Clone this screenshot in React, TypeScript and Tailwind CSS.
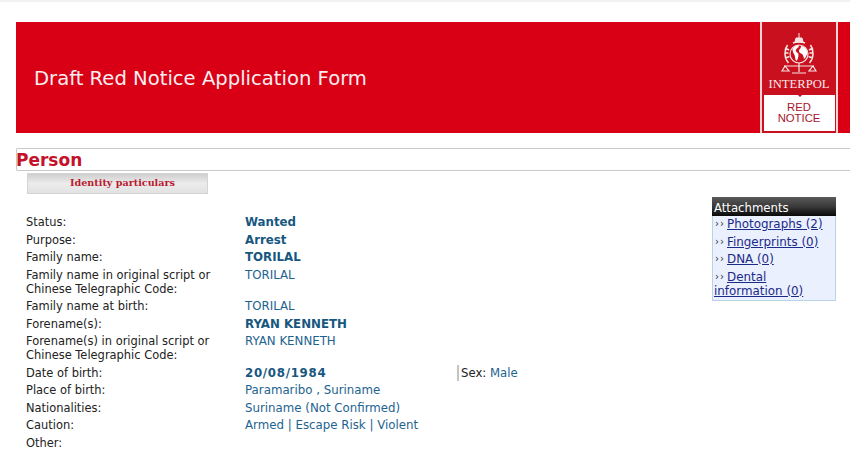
const ROWS: { label: string[]; value: string[]; bold?: boolean; sex?: boolean }[] = [
  { label: ["Status:"], value: ["Wanted"], bold: true },
  { label: ["Purpose:"], value: ["Arrest"], bold: true },
  { label: ["Family name:"], value: ["TORILAL"], bold: true },
  { label: ["Family name in original script or", "Chinese Telegraphic Code:"], value: ["TORILAL"] },
  { label: ["Family name at birth:"], value: ["TORILAL"] },
  { label: ["Forename(s):"], value: ["RYAN KENNETH"], bold: true },
  { label: ["Forename(s) in original script or", "Chinese Telegraphic Code:"], value: ["RYAN KENNETH"] },
  { label: ["Date of birth:"], value: ["20/08/1984"], bold: true, sex: true },
  { label: ["Place of birth:"], value: ["Paramaribo , Suriname"] },
  { label: ["Nationalities:"], value: ["Suriname (Not Confirmed)"] },
  { label: ["Caution:"], value: ["Armed | Escape Risk | Violent"] },
  { label: ["Other:"], value: [] },
];

const ATTACHMENTS = ["Photographs (2)", "Fingerprints (0)", "DNA (0)", "Dental"];

function Emblem() {
  return (
    <svg width="36" height="42" viewBox="0 0 36 42" fill="none" stroke="#f8e4e4" aria-hidden="true">
      <path d="M18 0v5M15 5h6l1 4h-8z" fill="#f8e4e4" strokeWidth="1" />
      <path d="M12 10c3-1.500 9-1.500 12 0" strokeWidth="1.5" />
      <circle cx="18" cy="21" r="9" fill="#c8101e" strokeWidth="1.2" />
      <path d="M11.500 16c2-3 4-4 6-4 1 2-1 3-2 4s-1 2 0 3 2 1 2 3-1 5-2 6c-2-2-1-4-2-6s-2-3-2-6zM20 13c3 0 6 3 6.500 7-1 3-2 5-3.500 6-.5-3-1-4-2-5s-3-1-3-3 2-2 2-5z" fill="#fff" stroke="none" />
      <path d="M6.500 12c-3.500 5-3.500 13 1 18M29.500 12c3.500 5 3.500 13-1 18M4 15l4 2M3.500 20h4M4.500 25l4-1.500M32 15l-4 2M32.500 20h-4M31.500 25l-4-1.500" strokeWidth="1.5" />
      <path d="M18 30v9M3 33h30M4 33l-3 5h7zM32 33l3 5h-7zM11 40h14" strokeWidth="1.200" />
    </svg>
  );
}

function Row({ row }: { row: (typeof ROWS)[number] }) {
  return (
    <div className="flex pb-[3.5px] leading-[14px]">
      <div className="w-[219px] shrink-0 text-[11.45px] text-[#222]">
        {row.label.map((line) => (
          <div key={line}>{line}</div>
        ))}
      </div>
      <div
        className={`w-[212px] shrink-0 text-[11.8px] ${row.bold ? "font-bold text-[#17577f]" : "text-[#1d6390]"} ${row.sex ? "tracking-[0.7px]" : ""}`}
      >
        {row.value.map((line) => (
          <div key={line}>{line}</div>
        ))}
      </div>
      {row.sex && (
        <div className="-my-px border-l-2 border-[#c4c4c4] py-px pl-[2px] text-[11.7px]">
          <span className="text-[#222]">Sex: </span>
          <span className="text-[#1d6390]">Male</span>
        </div>
      )}
    </div>
  );
}

export default function App() {
  return (
    <div className="relative h-[450px] w-[850px] overflow-hidden bg-white font-['DejaVu_Sans',Verdana,sans-serif] text-[12px]">
      <div className="h-[2px] bg-[#f2f2f2]" />

      <div className="ml-4 mt-5 flex h-[111px] items-stretch bg-[#d90016]">
        <div className="flex flex-1 items-center pl-[18px] pt-[2px] text-[19.6px] text-[#fbeef0]">
          Draft Red Notice Application Form
        </div>
        <div className="ml-[1px] flex w-[78px] flex-col items-center border-x-2 border-[#f4d5d5] bg-[#c8101e] px-[2px] pb-[2px]">
          <div className="mt-[11px]">
            <Emblem />
          </div>
          <div className="mt-[2px] font-['Liberation_Serif',serif] text-[12.6px] leading-[14px] text-[#fbeaea]">
            INTERPOL
          </div>
          <div className="relative mt-[4px] flex w-[71px] flex-1 flex-col items-center justify-center bg-white font-['Liberation_Sans',sans-serif] text-[11.3px] leading-[11.5px] text-[#a5162a]">
            <div className="absolute -top-px left-[33px] h-0 w-0 border-x-[3px] border-t-[3px] border-x-transparent border-t-[#c8101e]" />
            <div>RED</div>
            <div>NOTICE</div>
          </div>
        </div>
        <div className="w-[12px]" />
      </div>

      <div className="ml-4 mt-[15px] flex h-[23px] items-center rounded-l-[2px] border border-r-0 border-[#c9c9c9] pt-[2px] text-[17px] font-bold leading-none text-[#c4122a] [text-indent:-1px]">
        Person
      </div>

      <div className="ml-[27px] mt-[2px] flex h-[21px] w-[181px] items-center justify-center border border-[#d4d4d4] bg-gradient-to-b from-[#cfcfcf] via-[#ececec] to-[#e2e2e2] pb-[1px] pl-[10px] font-['DejaVu_Serif',serif] text-[9.6px] font-bold text-[#b81a30]">
        Identity particulars
      </div>

      <div className="ml-[26px] mt-[21px]">
        {ROWS.map((row) => (
          <Row key={row.label[0]} row={row} />
        ))}
      </div>

      {/* sidebar box floats over the right of the form */}
      <div className="absolute left-[712px] top-[197px] w-[124px] border border-t-0 border-[#b9d3e6] bg-[#eaf0fd] pb-[2px] leading-[14px]">
        <div className="-mx-px h-[19px] bg-gradient-to-b from-[#5a5a5a] via-[#3a3a3a] to-[#0a0a0a] pl-[2px] pt-[4px] text-[11.7px] text-white">
          Attachments
        </div>
        <div className="pl-[1px] pt-px text-[11.9px] text-[#1c2a88]">
          {ATTACHMENTS.map((item) => (
            <div key={item} className="flex h-[17.5px] items-start">
              <span className="w-[13px] shrink-0 pl-[1px] text-[10px] tracking-[1px] text-[#333]">››</span>
              <a className="underline">{item}</a>
            </div>
          ))}
          <a className="-mt-[3.5px] block underline">information (0)</a>
        </div>
      </div>
    </div>
  );
}
